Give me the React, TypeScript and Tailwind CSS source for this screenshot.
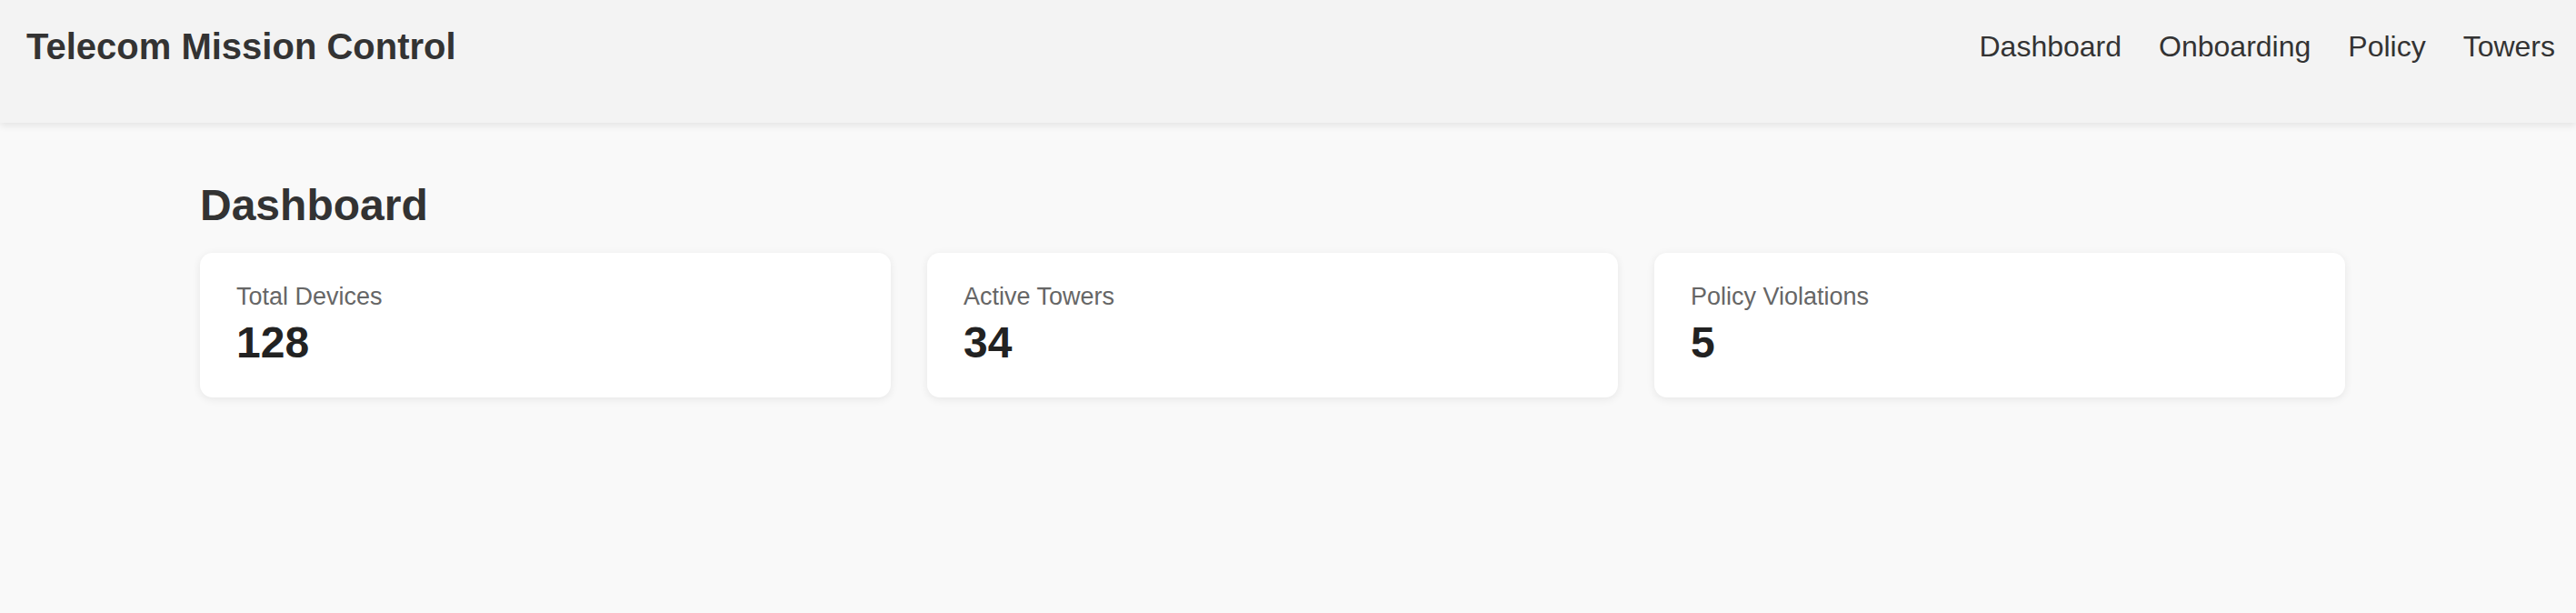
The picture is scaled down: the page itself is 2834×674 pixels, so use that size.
export default function App() {
  const stats = [
    { label: 'Total Devices', value: 128 },
    { label: 'Active Towers', value: 34 },
    { label: 'Policy Violations', value: 5 },
  ];
  const links = ['Dashboard', 'Onboarding', 'Policy', 'Towers'];

  return (
    <div className="min-h-screen bg-[#f9f9f9] font-['Liberation_Sans',Arial,sans-serif]">
      <header className="h-[135px] bg-[#f3f3f3] pl-[29px] pr-[23px] pt-[29px] shadow-[0_3px_8px_rgba(0,0,0,0.09)] relative">
        <div className="flex items-center justify-between">
          <h1 className="text-[40px] font-bold leading-[normal] text-[#333]">Telecom Mission Control</h1>
          <nav className="flex gap-[41px]">
            {links.map((l) => (
              <a key={l} href="#" className="text-[32px] leading-[normal] text-[#333]">
                {l}
              </a>
            ))}
          </nav>
        </div>
      </header>

      <main className="pl-[220px] pt-[63px]">
        <h2 className="text-[48px] font-bold leading-[normal] text-[#333] mb-[25px]">Dashboard</h2>
        <div className="grid grid-cols-3 gap-[40px] w-[2360px]">
          {stats.map((s) => (
            <div
              key={s.label}
              className="bg-white rounded-[14px] pt-[33px] pb-[33px] px-[40px] shadow-[0_2px_10px_rgba(0,0,0,0.08)]"
            >
              <div className="text-[27px] leading-[normal] text-[#666] mb-[7px]">{s.label}</div>
              <div className="text-[48px] font-bold leading-[normal] text-[#222]">{s.value}</div>
            </div>
          ))}
        </div>
      </main>
    </div>
  );
}
